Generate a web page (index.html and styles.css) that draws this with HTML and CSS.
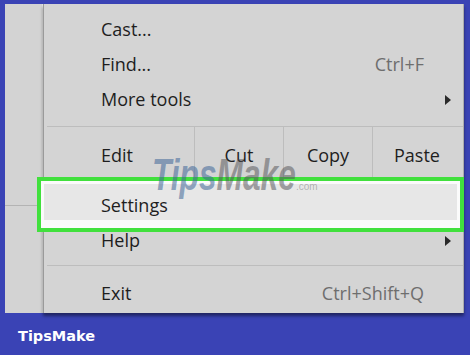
FILE: index.html
```html
<!DOCTYPE html>
<html>
<head>
<meta charset="utf-8">
<link rel="stylesheet" href="styles.css">
</head>
<body>
<div class="page">
  <div class="screen">
    <div class="side">
      <div class="side-top"></div>
    </div>
    <div class="menu">
      <div class="item"><span>Cast...</span></div>
      <div class="item"><span>Find...</span><span class="key">Ctrl+F</span></div>
      <div class="item sub"><span>More tools</span><span class="arrow"></span></div>
      <div class="sep"></div>
      <div class="edit-row">
        <span class="edit-label">Edit</span>
        <span class="cell">Cut</span>
        <span class="cell">Copy</span>
        <span class="cell">Paste</span>
      </div>
      <div class="item settings"><span class="label">Settings</span></div>
      <div class="item sub"><span>Help</span><span class="arrow"></span></div>
      <div class="sep sep2"></div>
      <div class="item"><span>Exit</span><span class="key">Ctrl+Shift+Q</span></div>
    </div>
    <div class="highlight"></div>
    <div class="watermark"><span class="wm-main"><span class="wm-tips">Tips</span><span class="wm-make">Make</span></span><span class="wm-com">.com</span></div>
  </div>
  <div class="footer">TipsMake</div>
</div>
</body>
</html>
```

FILE: styles.css
```css
* { box-sizing: border-box; }

html, body {
  margin: 0;
  padding: 0;
}

body {
  background: #3a43b5;
  font-family: "Open Sans", "Noto Sans", sans-serif;
}

.page {
  width: 470px;
  height: 355px;
  background: #3a43b5;
  display: flex;
  flex-direction: column;
}

.screen {
  position: relative;
  margin: 4px 6px 0 5px;
  height: 309px;
  display: flex;
  background: #d3d3d3;
}

.side {
  width: 38px;
  border-right: 1px solid #e2e2e2;
  display: flex;
  flex-direction: column;
}

.side-top {
  height: 202px;
  border-bottom: 1px solid #b3b3b3;
}

.menu {
  flex: 1;
  display: flex;
  flex-direction: column;
  padding-top: 8px;
  border-left: 1px solid #9a9a9a;
  border-right: 1px solid #ababab;
  background: #d4d4d4;
  box-shadow: 0 3px 3px rgba(0, 0, 0, 0.45);
  font-size: 18px;
  color: #1e1e1e;
}

.item {
  height: 35px;
  line-height: 35px;
  display: flex;
  align-items: center;
  justify-content: space-between;
  padding: 0 39px 0 57px;
}

.item.sub {
  padding-right: 12px;
}

.key {
  color: #6e6e6e;
}

.arrow {
  width: 0;
  height: 0;
  border-top: 5px solid transparent;
  border-bottom: 5px solid transparent;
  border-left: 6px solid #2a2a2a;
}

.sep {
  margin: 9px 0 0 3px;
  height: 1px;
  background: #bdbdbd;
}

.sep2 {
  margin-top: 7px;
  margin-bottom: 10px;
}

.edit-row {
  height: 56px;
  display: flex;
  align-items: center;
}

.edit-label {
  width: 150px;
  padding-left: 57px;
  align-self: center;
}

.cell {
  width: 89px;
  height: 100%;
  display: flex;
  align-items: center;
  justify-content: center;
  border-left: 1px solid #bdbdbd;
}

.cell:first-of-type {
  width: 90px;
}

.settings {
  height: 40px;
  padding-top: 4px;
  line-height: 36px;
}

.settings .label {
  position: relative;
  z-index: 2;
}

.highlight {
  position: absolute;
  left: 32px;
  top: 173px;
  width: 427px;
  height: 55px;
  z-index: 1;
  border: 4px solid #41e03d;
  box-shadow: inset 0 0 0 3px #fbfbfb;
  background: linear-gradient(to bottom, #e7e7e7 0, #e7e7e7 39px, #fafafa 39px);
}

.watermark {
  position: absolute;
  left: 147px;
  top: 149px;
  z-index: 3;
  display: flex;
  align-items: baseline;
  font-family: "Liberation Sans", Arial, sans-serif;
  font-weight: bold;
  font-style: italic;
  line-height: 1;
  pointer-events: none;
}

.wm-main {
  font-size: 44px;
  width: 144px;
  display: inline-block;
  white-space: nowrap;
  transform: scaleX(0.72);
  transform-origin: left center;
}

.wm-tips {
  color: rgba(60, 100, 150, 0.55);
}

.wm-make {
  color: rgba(80, 80, 85, 0.5);
}

.wm-com {
  font-size: 10px;
  font-style: normal;
  font-weight: normal;
  color: rgba(90, 90, 90, 0.4);
  margin-left: 0;
}

.footer {
  height: 42px;
  padding: 15px 0 0 18px;
  font-family: "DejaVu Sans", sans-serif;
  font-weight: bold;
  font-size: 14.5px;
  line-height: 17px;
  color: #ffffff;
}
```
